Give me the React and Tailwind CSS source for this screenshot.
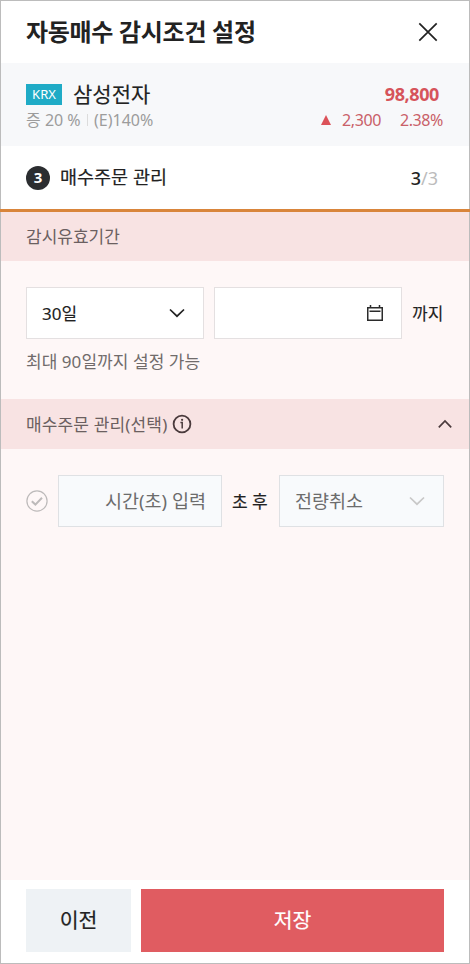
import clsx from 'clsx'

const stock = {
  market: 'KRX',
  name: '삼성전자',
  margin: '증 20 %',
  credit: '(E)140%',
  price: '98,800',
  change: '2,300',
  rate: '2.38%',
}

function Chevron({ className, up }) {
  return (
    <svg viewBox="0 0 16 10" fill="none" stroke="currentColor" strokeWidth="1.7" className={className}>
      <path d={up ? 'M1.8 8.3 8 2l6.2 6.3' : 'M1 1.5 8 8.2l7-6.7'} />
    </svg>
  )
}

function CloseIcon() {
  return (
    <svg viewBox="0 0 20 20" fill="none" stroke="#222" strokeWidth="1.7" className="mr-[6px] h-5 w-5">
      <path d="M1.3 1.3l17.4 17.4M18.7 1.3 1.3 18.7" />
    </svg>
  )
}

function CalendarIcon() {
  return (
    <svg viewBox="0 0 16 16" fill="none" stroke="#2b2b2b" strokeWidth="1.5" className="h-4 w-4">
      <path d="M.75 2.75h14.5v12.5H.75zM3.5 0v3M12.5 0v3M2.5 6.25h11" />
    </svg>
  )
}

function InfoIcon() {
  return (
    <svg viewBox="0 0 20 20" fill="none" stroke="#4a3a3c" strokeWidth="1.8" className="ml-[5px] h-5 w-5">
      <circle cx="10" cy="10" r="8.4" />
      <path d="M8.4 8.6h1.8v5.9" strokeWidth="1.5" />
      <circle cx="10.1" cy="5.8" r="1.1" fill="#4a3a3c" stroke="none" />
    </svg>
  )
}

function CheckIcon() {
  return (
    <svg viewBox="0 0 22 22" fill="none" stroke="#bdbaba" className="h-[22px] w-[22px]">
      <circle cx="11" cy="11" r="10.1" strokeWidth="1.2" />
      <path d="M5.8 11.2 9.4 14.6 16 7.8" strokeWidth="2" />
    </svg>
  )
}

function SectionBar({ children, className }) {
  return (
    <div className={clsx('flex items-center bg-[#f8e3e3] pr-[16px] pl-[25px] text-[17px] text-[#6b5f60]', className)}>
      {children}
    </div>
  )
}

export default function App() {
  return (
    <div className="flex h-[964px] w-[470px] flex-col border border-[#bcbcbc] bg-white font-['Noto_Sans','Noto_Sans_CJK_KR',sans-serif] leading-none text-[#222]">
      <header className="flex h-[62px] items-center justify-between pr-[25px] pl-[25px]">
        <h1 className="text-[24px] font-bold tracking-[-0.3px]">자동매수 감시조건 설정</h1>
        <button aria-label="닫기"><CloseIcon /></button>
      </header>

      <section className="flex h-[83px] justify-between bg-[#f7f8fa] pr-[25px] pl-[25px]">
        <div>
          <div className="mt-[18px] flex h-[26px] items-center">
            <span className="flex h-[21px] w-9 items-center justify-center bg-[#1fabc6] text-[13px] text-white">{stock.market}</span>
            <span className="ml-[11px] text-[21px] [-webkit-text-stroke:0.15px]">{stock.name}</span>
          </div>
          <div className="mt-[3px] flex h-5 items-center text-[16px] text-[#9c9c9c]">
            <span className="w-[56px] whitespace-nowrap">{stock.margin}</span>
            <span className="mr-[6px] ml-[5px] h-3 w-px bg-[#dcdcdc]" />
            <span>{stock.credit}</span>
          </div>
        </div>
        <div className="flex flex-col items-end text-[#c96068]">
          <div className="mt-[18px] mr-[5px] flex h-[26px] items-center text-[18px] font-bold tracking-[-0.4px] text-[#d6545b]">{stock.price}</div>
          <div className="mt-[3px] flex h-5 items-center text-[16px] tracking-[-0.4px]">
            <svg viewBox="0 0 10 10" className="mr-[11px] h-[10px] w-[10px]"><path d="M5 0l5 10H0z" fill="#dc5259" /></svg>
            <span>{stock.change}</span>
            <span className="mr-px ml-[19px]">{stock.rate}</span>
          </div>
        </div>
      </section>

      <div className="flex h-[63px] items-center justify-between pr-[31px] pl-[25px]">
        <div className="flex items-center">
          <span className="flex h-6 w-6 items-center justify-center rounded-full bg-[#2b2d30] text-[15px] font-bold text-white">3</span>
          <h2 className="ml-[10px] text-[18.5px] [-webkit-text-stroke:0.2px]">매수주문 관리</h2>
        </div>
        <div className="text-[18px] font-medium">
          3<span className="font-normal text-[#bcbcbc]">/3</span>
        </div>
      </div>
      <div className="-mx-px h-[3px] bg-[#d9853b]" />

      <main className="flex-1 bg-[#fef7f7]">
        <SectionBar className="h-[49px]">감시유효기간</SectionBar>
        <div className="h-[138px] pt-[26px] pr-[25px] pl-[25px]">
          <div className="flex items-center text-[17px] [-webkit-text-stroke:0.12px]">
            <button className="flex h-[52px] w-[178px] items-center justify-between border border-[#e4e0e1] bg-white pr-[18px] pl-[15px]">
              30일
              <Chevron className="h-[10px] w-4" />
            </button>
            <button aria-label="날짜 선택" className="ml-[10px] flex h-[52px] w-[188px] items-center justify-end border border-[#e4e0e1] bg-white pr-[18px]">
              <CalendarIcon />
            </button>
            <span className="ml-[10px]">까지</span>
          </div>
          <p className="mt-[14px] text-[17px] tracking-[0.05px] text-[#706b6b]">최대 90일까지 설정 가능</p>
        </div>

        <SectionBar className="h-[50px]">
          <span className="tracking-[0.15px]">매수주문 관리(선택)</span>
          <InfoIcon />
          <Chevron up className="ml-auto h-[10px] w-4 text-[#4a3a3c]" />
        </SectionBar>
        <div className="flex items-center pt-[26px] pl-[25px] text-[17px]">
          <CheckIcon />
          <div className="ml-[10px] flex h-[52px] w-[164px] items-center justify-end border border-[#dfe1e4] bg-[#f8fafc] pr-[15px] text-[18.5px] text-[#6c6c6c]">시간(초) 입력</div>
          <span className="ml-[10px] w-[37px] whitespace-nowrap [-webkit-text-stroke:0.2px]">초 후</span>
          <button className="ml-[10px] flex h-[52px] w-[165px] items-center justify-between border border-[#dfe1e4] bg-[#f8fafc] pr-[18px] pl-[15px] text-[18.5px] text-[#6c6c6c]">
            전량취소
            <Chevron className="h-[10px] w-4 text-[#c8c8c8]" />
          </button>
        </div>
      </main>

      <footer className="flex h-[83px] gap-[10px] pt-[9px] pr-[25px] pl-[25px] text-[20.5px] [-webkit-text-stroke:0.2px]">
        <button className="h-[63px] w-[105px] bg-[#eef2f5]">이전</button>
        <button className="h-[63px] flex-1 bg-[#e05c61] text-white">저장</button>
      </footer>
    </div>
  )
}
